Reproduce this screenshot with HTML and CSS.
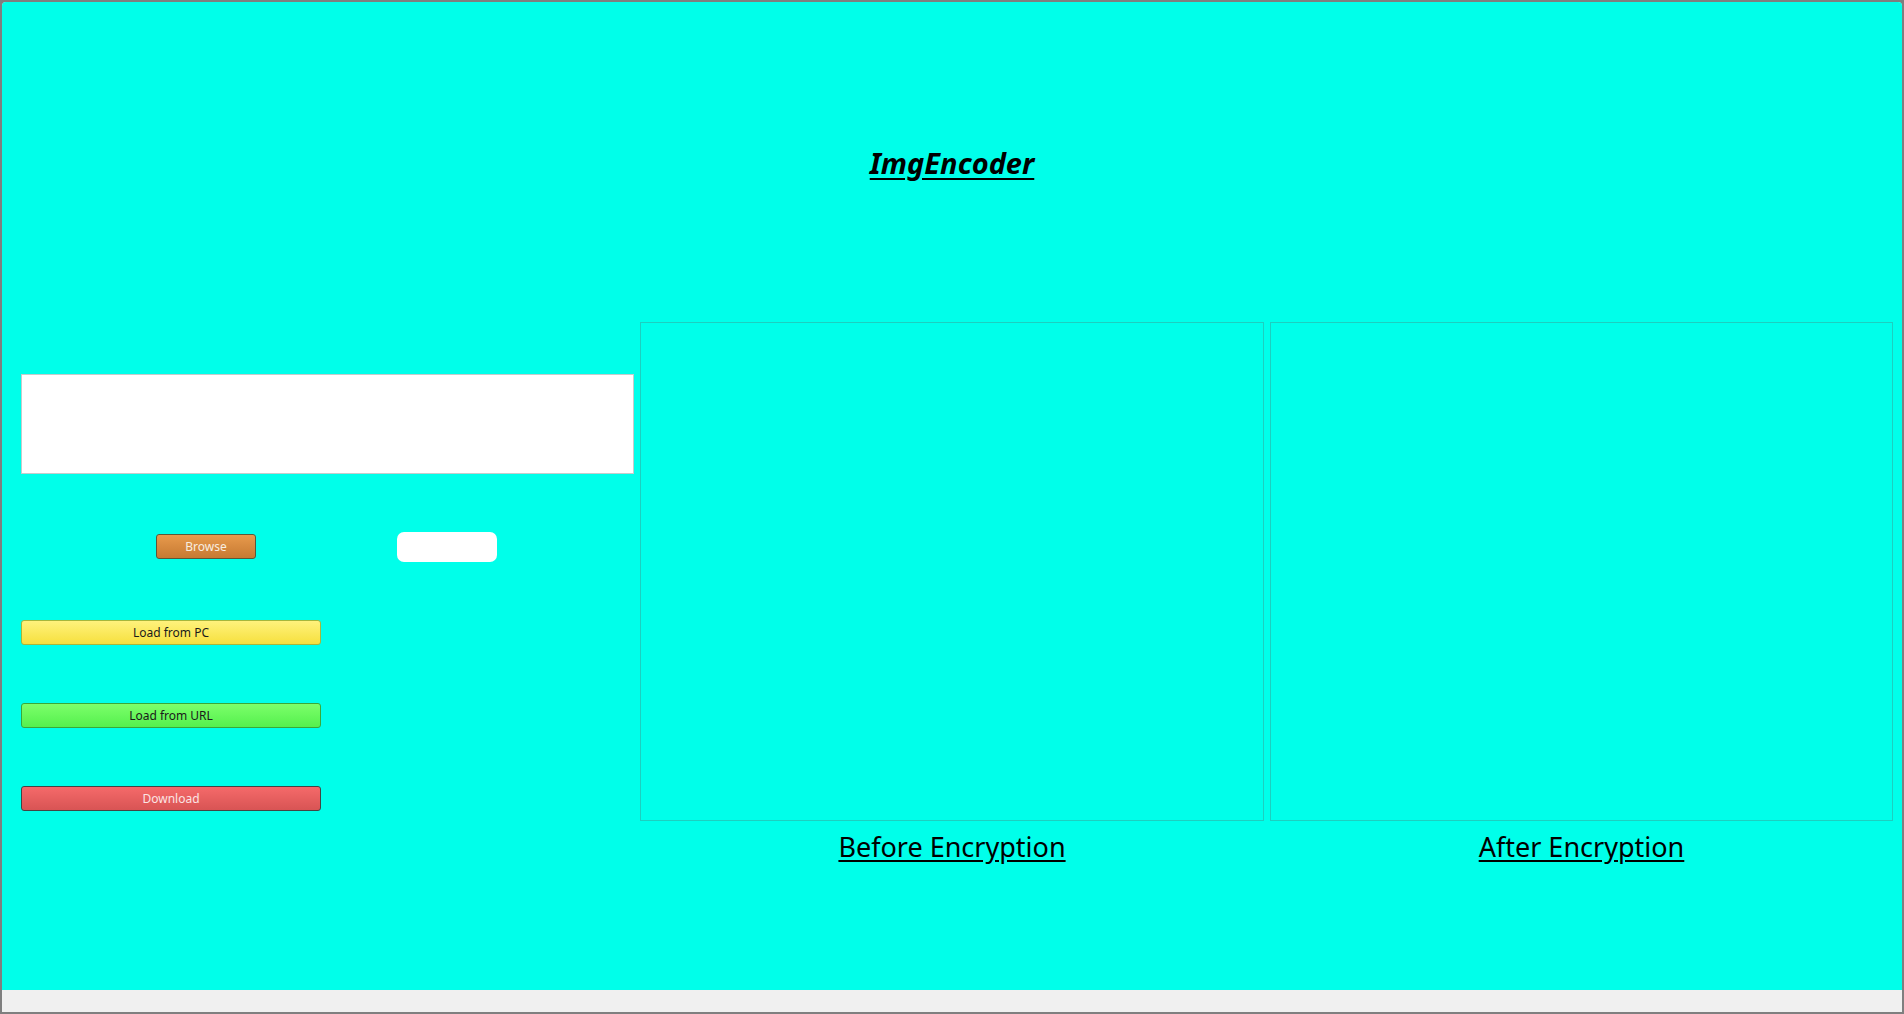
FILE: index.html
```html
<!DOCTYPE html>
<html>
<head>
<meta charset="utf-8">
<title>ImgEncoder</title>
<link rel="stylesheet" href="styles.css">
</head>
<body>
<div class="window">
  <div class="content">
    <h1 class="title">ImgEncoder</h1>
    <div class="main">
      <div class="controls">
        <div class="textbox"></div>
        <div class="browse-row">
          <button class="btn btn-browse">Browse</button>
          <div class="field"></div>
        </div>
        <button class="btn btn-wide btn-pc">Load from PC</button>
        <button class="btn btn-wide btn-url">Load from URL</button>
        <button class="btn btn-wide btn-download">Download</button>
      </div>
      <div class="viewer viewer-before">
        <div class="panel"></div>
        <div class="caption">Before Encryption</div>
      </div>
      <div class="viewer viewer-after">
        <div class="panel"></div>
        <div class="caption">After Encryption</div>
      </div>
    </div>
  </div>
  <div class="statusbar"></div>
</div>
</body>
</html>
```

FILE: styles.css
```css
* { box-sizing: border-box; }
html, body {
  margin: 0;
  padding: 0;
  background: #7f7f7f;
}
.window {
  width: 1904px;
  height: 1014px;
  border: 2px solid #7f7f7f;
  border-radius: 6px 6px 2px 2px;
  overflow: hidden;
  display: flex;
  flex-direction: column;
  background: #f0f0f0;
  font-family: "Noto Sans", "Open Sans", sans-serif;
}
.content {
  height: 988px;
  background: #00ffea;
  display: flex;
  flex-direction: column;
}
.statusbar {
  flex: 1;
  background: #f0f0f0;
}
.title {
  margin: 142px 0 0 0;
  text-align: center;
  font-size: 29px;
  line-height: 38px;
  font-weight: 700;
  font-style: italic;
  text-decoration: underline;
  text-underline-offset: 4px;
  color: #000;
}
.main {
  margin-top: 140px;
  padding: 0 9px 0 19px;
  display: flex;
  align-items: flex-start;
  gap: 6px;
}
.controls {
  width: 613px;
  padding-top: 52px;
  display: flex;
  flex-direction: column;
  align-items: flex-start;
}
.textbox {
  width: 613px;
  height: 100px;
  background: #fff;
  border: 1px solid #c4cccc;
}
.browse-row {
  margin-top: 58px;
  height: 30px;
  display: flex;
  align-items: flex-start;
}
.btn {
  font-family: "Noto Sans", "Open Sans", sans-serif;
  font-size: 12px;
  height: 25px;
  padding: 0;
  border-radius: 3px;
  cursor: pointer;
}
.btn-browse {
  margin-left: 135px;
  margin-top: 2px;
  width: 100px;
  border: 1px solid #5b5838;
  background: linear-gradient(#e89a4c, #c67a33);
  color: #f8eee0;
}
.field {
  margin-left: 141px;
  width: 100px;
  height: 30px;
  background: #fff;
  border-radius: 7px;
}
.btn-wide {
  width: 300px;
  margin-top: 58px;
}
.btn-pc {
  border: 1px solid #a6b63c;
  background: linear-gradient(#fff27c, #f6e03e);
  color: #1a1a1a;
}
.btn-url {
  border: 1px solid #3aa83a;
  background: linear-gradient(#7cff6a, #55f04e);
  color: #1a1a1a;
}
.btn-download {
  border: 1px solid #444;
  background: linear-gradient(#f56a6a, #d85454);
  color: #fbe4e4;
}
.viewer {
  display: flex;
  flex-direction: column;
  align-items: center;
}
.viewer-before { width: 624px; }
.viewer-after { width: 623px; }
.panel {
  width: 100%;
  height: 499px;
  border: 1px solid #1ccfc0;
}
.caption {
  margin-top: 7px;
  font-size: 27px;
  line-height: 38px;
  text-decoration: underline;
  text-underline-offset: 3px;
  color: #000;
}
```
